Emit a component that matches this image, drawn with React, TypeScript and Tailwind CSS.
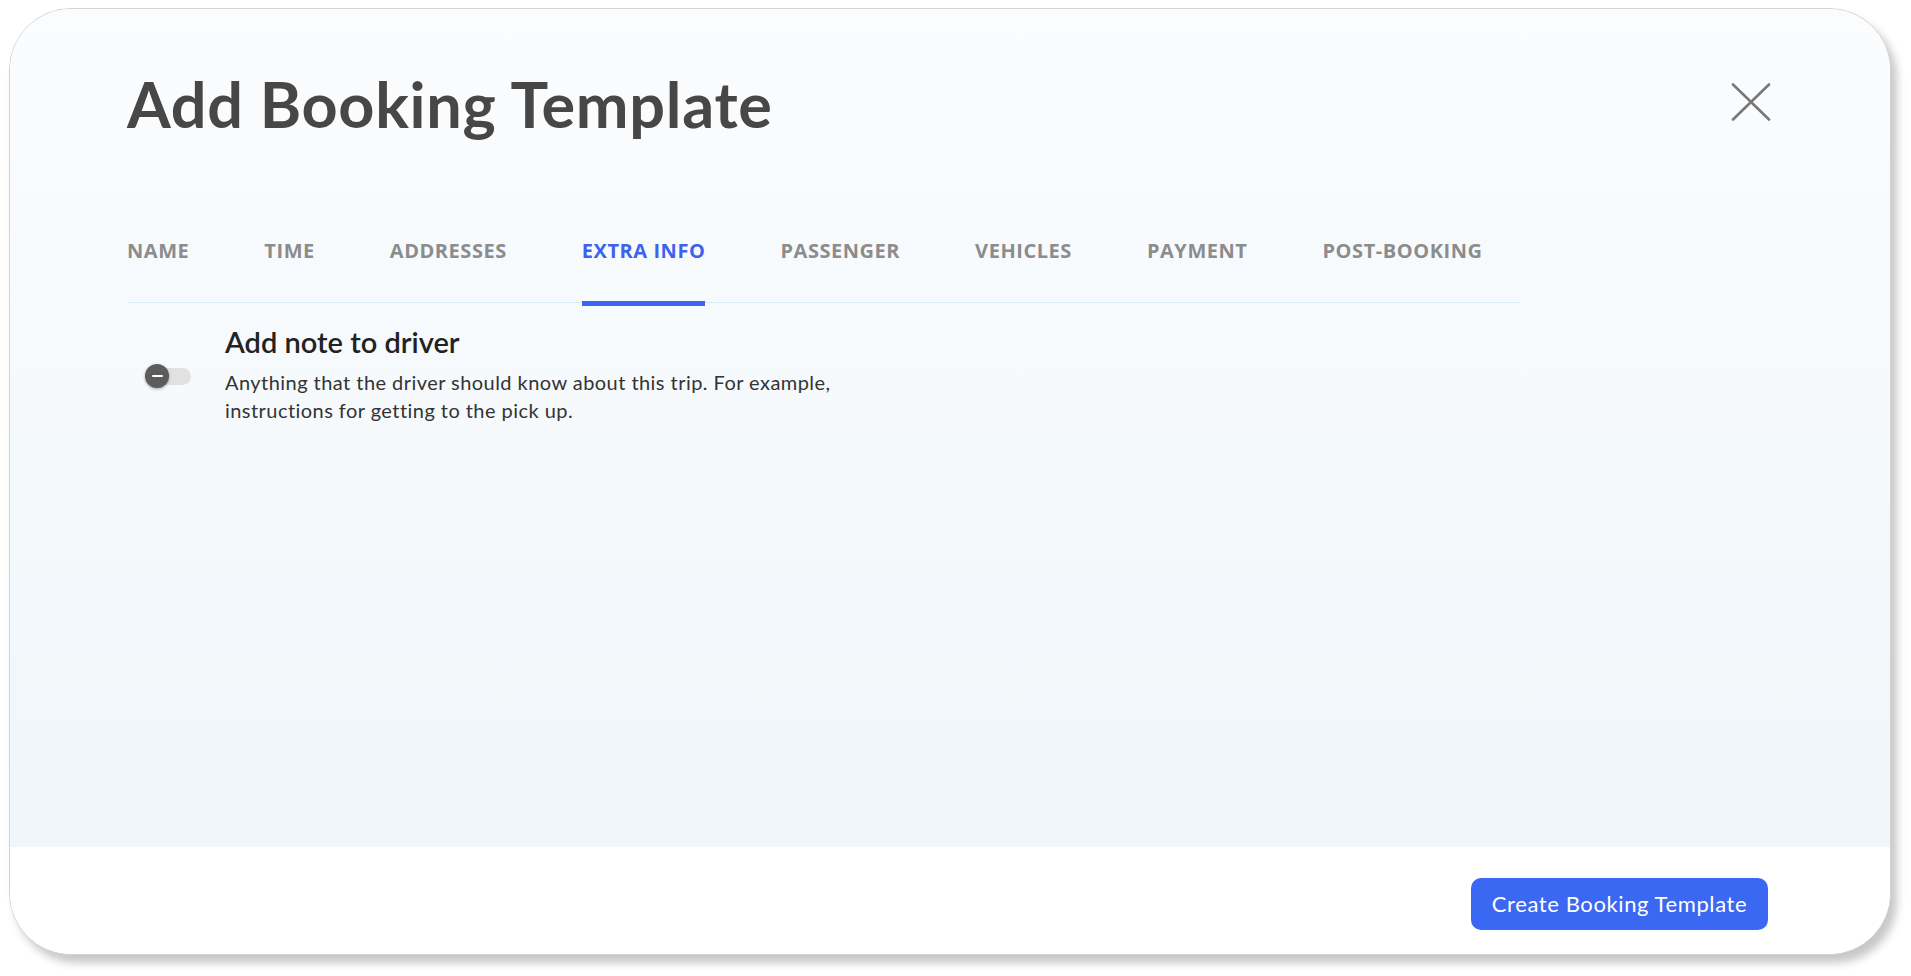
import React, { useState } from 'react';

const tabs = ['NAME', 'TIME', 'ADDRESSES', 'EXTRA INFO', 'PASSENGER', 'VEHICLES', 'PAYMENT', 'POST-BOOKING'];

const CloseIcon: React.FC = () => (
  <svg width="40" height="38" viewBox="0 0 40 38" fill="none" className="block">
    <path d="M2 1.5 L38 36.5 M38 1.5 L2 36.5" stroke="#787878" strokeWidth="2.6" strokeLinecap="round" />
  </svg>
);

const Toggle: React.FC<{ on: boolean; onClick: () => void }> = ({ on, onClick }) => (
  <button onClick={onClick} className="relative w-[46px] h-[26px] shrink-0 flex items-center">
    <span className="absolute left-[4px] right-0 h-[17px] rounded-full bg-[#e1e1e1]" />
    <span
      className={`absolute top-[1px] ${on ? 'left-[22px] bg-[#3b68f3]' : 'left-0 bg-[#5c5c5c]'} w-[24px] h-[24px] rounded-full shadow-[0_1px_3px_rgba(0,0,0,0.35)] flex items-center justify-center`}
    >
      <span className="w-[11px] h-[2px] bg-white rounded-full" />
    </span>
  </button>
);

export default function App() {
  const [active, setActive] = useState('EXTRA INFO');
  const [noteOn, setNoteOn] = useState(false);

  return (
    <div className="w-[1911px] h-[976px] bg-white overflow-hidden pt-[8px] pl-[9px] font-['Lato',sans-serif]">
      <div className="w-[1882px] h-[947px] rounded-[62px] border border-[#d2d2d2] shadow-[6px_8px_9px_rgba(0,0,0,0.22)] overflow-hidden flex flex-col bg-white">
        {/* body */}
        <div className="flex-1 bg-gradient-to-b from-[#fbfcfe] to-[#eff7fa] px-[117px] pt-[64px]">
          <div className="flex justify-between items-start">
            <h1 className="text-[63px] leading-[62px] font-bold text-[#474747] tracking-[0.7px]">Add Booking Template</h1>
            <div className="mt-[10px] mr-[2px]">
              <CloseIcon />
            </div>
          </div>

          <div className="mt-[104px] w-[1394px] flex gap-[75px] border-b border-[#d9ebf5]">
            {tabs.map((t) => (
              <button
                key={t}
                onClick={() => setActive(t)}
                className={`relative pb-[39px] text-[20px] leading-[24px] font-bold font-['Open_Sans',sans-serif] tracking-[0.55px] ${
                  active === t ? 'text-[#3d63ee]' : 'text-[#8c8c8c]'
                }`}
              >
                {t}
                {active === t && <span className="absolute left-0 right-0 -bottom-[4px] h-[5px] bg-[#3a66f1]" />}
              </button>
            ))}
          </div>

          <div className="mt-[22px] pl-[18px] flex items-center gap-[34px]">
            <div className="mt-[3px]">
              <Toggle on={noteOn} onClick={() => setNoteOn(!noteOn)} />
            </div>
            <div>
              <h2 className="text-[29px] leading-[34px] font-semibold text-[#222222]">Add note to driver</h2>
              <p className="mt-[9px] text-[20px] leading-[28px] tracking-[0.45px] text-[#333333] w-[660px]">
                Anything that the driver should know about this trip. For example, instructions for getting to the pick up.
              </p>
            </div>
          </div>
        </div>

        {/* footer */}
        <div className="h-[107px] bg-white flex justify-end items-start pt-[31px] pr-[122px]">
          <button className="w-[297px] h-[52px] rounded-[10px] bg-[#3b68f3] text-white text-[22px] leading-none tracking-[0.6px]">
            Create Booking Template
          </button>
        </div>
      </div>
    </div>
  );
}
